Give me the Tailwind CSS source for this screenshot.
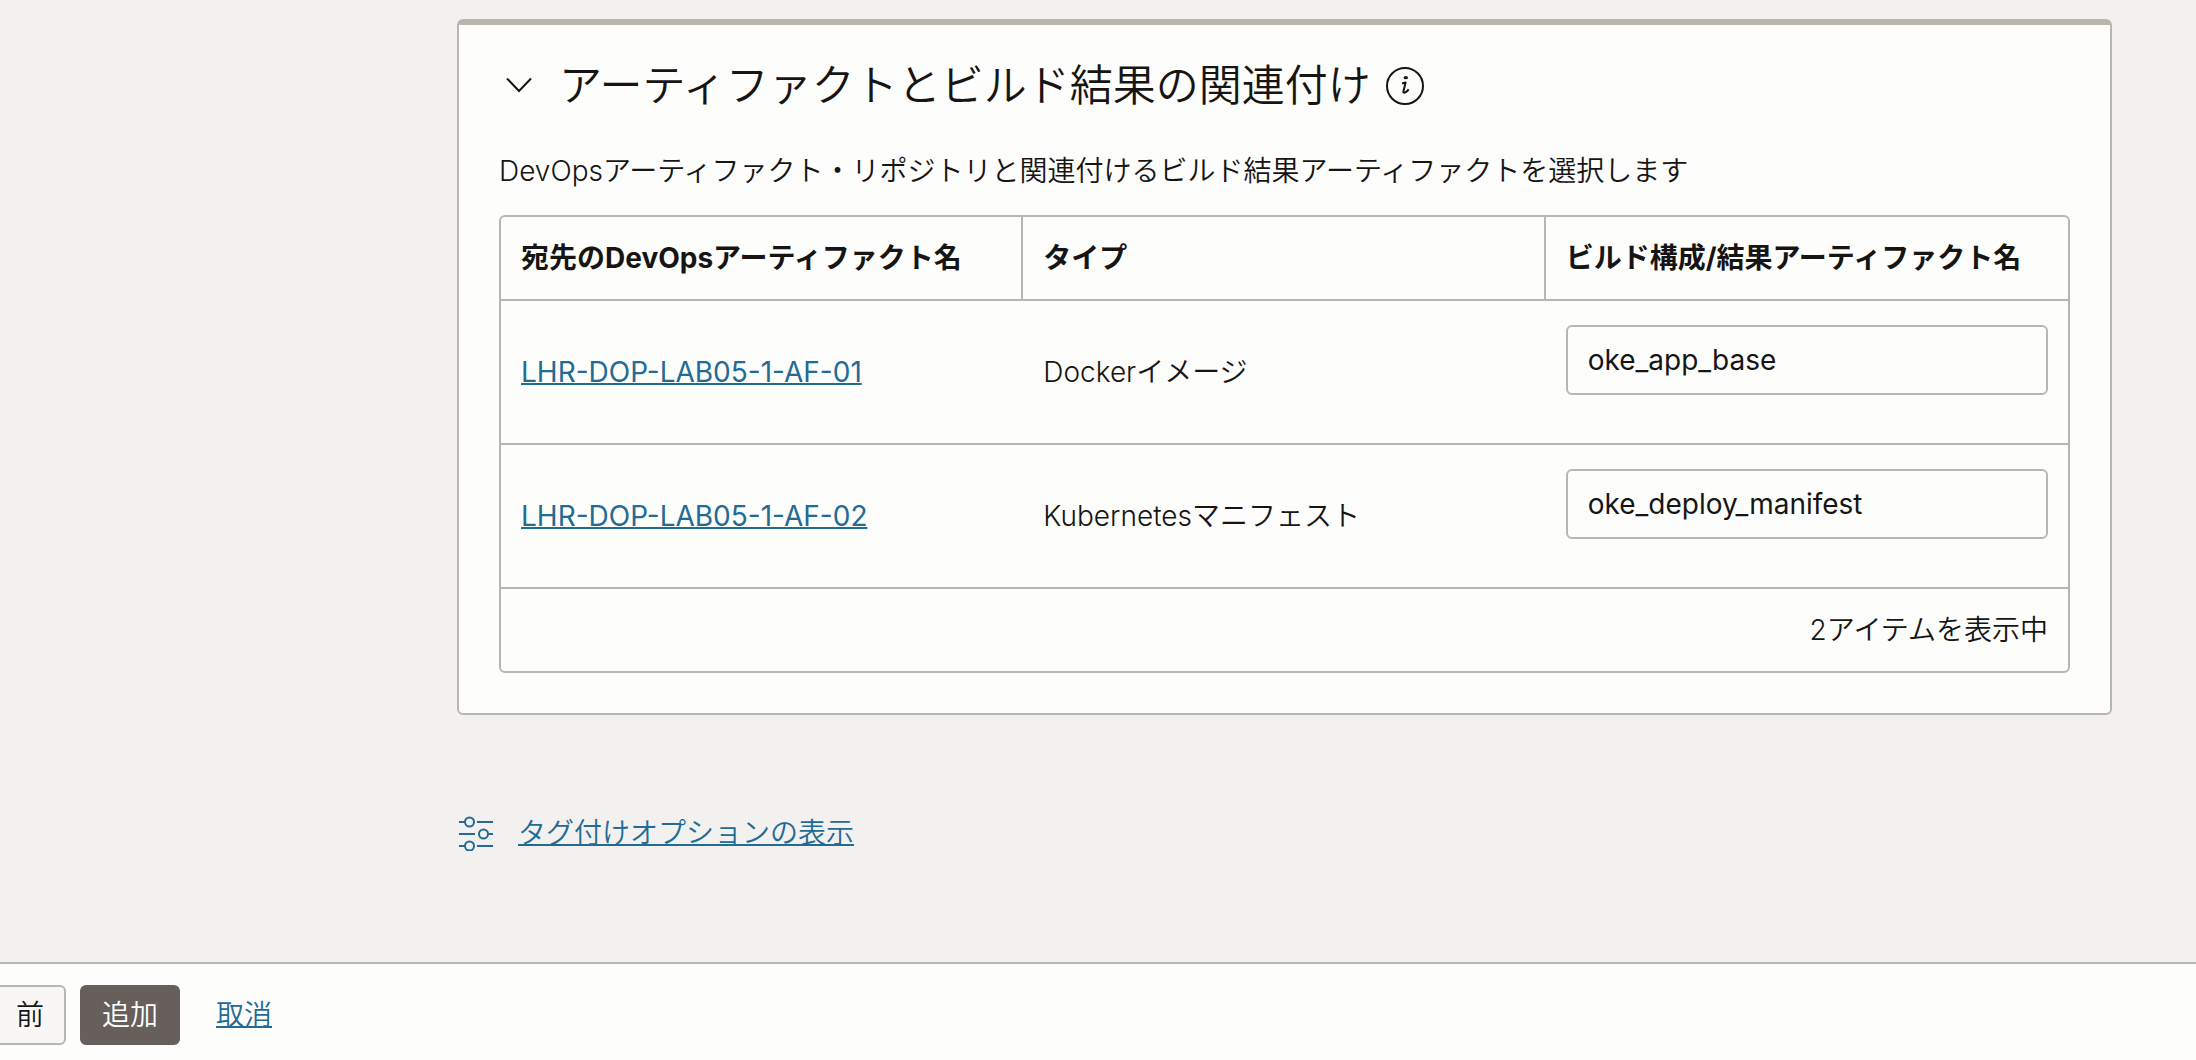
<!DOCTYPE html>
<html lang="ja">
<head>
  <meta charset="UTF-8" />
  <meta name="viewport" content="width=device-width, initial-scale=1.0" />
  <title>アーティファクトとビルド結果の関連付け</title>
  <script src="https://cdn.jsdelivr.net/npm/@tailwindcss/browser@4"></script>
</head>
<body class="flex min-h-screen flex-col bg-[#f3f1f0] font-['Inter','Noto_Sans_CJK_JP',sans-serif] text-[28px] leading-10 font-normal text-[#161513]">
  <main class="mt-[19px] mr-[84px] ml-[457px]">
    <section class="rounded-md border-2 border-t-[6px] border-[#bbb5b0] bg-[#fdfdfc] px-10 pt-[30px] pb-10">
      <div class="flex items-center">
        <button type="button" aria-label="折りたたむ" aria-expanded="true" class="flex h-14 w-10 items-center justify-center">
          <svg class="h-4 w-7" viewBox="0 0 28 16" fill="none" stroke="currentColor" stroke-width="2">
            <path d="M2 1.5L14 14L26 1.5" />
          </svg>
        </button>
        <h1 class="ml-5 text-[43px] leading-[60px] font-[350]">アーティファクトとビルド結果の関連付け</h1>
        <button type="button" aria-label="情報" class="ml-3.5">
          <svg class="size-10" viewBox="0 0 40 40" fill="none">
            <circle cx="20" cy="21" r="18" stroke="currentColor" stroke-width="2" />
            <ellipse cx="20.8" cy="12.7" rx="2.2" ry="1.600" fill="currentColor" />
            <path d="M17 18.400L20.600 17.600L18.400 26.400C18.100 28.200 19.600 28 20.800 27.200C21.900 26.500 22.800 25.600 23.600 24.400" stroke="currentColor" stroke-width="2" stroke-linejoin="round" />
          </svg>
        </button>
      </div>

      <p class="mt-9 font-[350]">DevOpsアーティファクト・リポジトリと関連付けるビルド結果アーティファクトを選択します</p>

      <table class="mt-6 w-full table-fixed border-separate border-spacing-0 rounded-md border-2 border-[#bbb5b0] text-left">
        <thead>
          <tr>
            <th scope="col" class="h-[84px] border-r-2 border-b-2 border-[#bbb5b0] px-5 font-bold whitespace-nowrap">宛先のDevOpsアーティファクト名</th>
            <th scope="col" class="border-r-2 border-b-2 border-[#bbb5b0] px-5 font-bold whitespace-nowrap">タイプ</th>
            <th scope="col" class="border-b-2 border-[#bbb5b0] px-5 font-bold whitespace-nowrap">ビルド構成/結果アーティファクト名</th>
          </tr>
        </thead>
        <tbody>
          <tr>
            <td class="h-36 border-b-2 border-[#bbb5b0] px-5"><a href="#" class="text-[#226b95] underline decoration-2">LHR-DOP-LAB05-1-AF-01</a></td>
            <td class="border-b-2 border-[#bbb5b0] px-5 font-[350]">Dockerイメージ</td>
            <td class="border-b-2 border-[#bbb5b0] px-5 pt-6 align-top">
              <input type="text" aria-label="ビルド構成/結果アーティファクト名 1" value="oke_app_base" class="block h-[70px] w-full rounded-md border-2 border-[#bbb5b0] px-5" />
            </td>
          </tr>
          <tr>
            <td class="h-36 border-b-2 border-[#bbb5b0] px-5"><a href="#" class="text-[#226b95] underline decoration-2">LHR-DOP-LAB05-1-AF-02</a></td>
            <td class="border-b-2 border-[#bbb5b0] px-5 font-[350]">Kubernetesマニフェスト</td>
            <td class="border-b-2 border-[#bbb5b0] px-5 pt-6 align-top">
              <input type="text" aria-label="ビルド構成/結果アーティファクト名 2" value="oke_deploy_manifest" class="block h-[70px] w-full rounded-md border-2 border-[#bbb5b0] px-5" />
            </td>
          </tr>
        </tbody>
        <tfoot>
          <tr>
            <td colspan="3" class="h-[82px] px-5 text-right font-[350]">2アイテムを表示中</td>
          </tr>
        </tfoot>
      </table>
    </section>

    <a href="#" class="mt-[98px] ml-px flex w-fit items-center gap-6 font-[350] text-[#226b95]">
      <svg class="h-9 w-9" viewBox="0 0 36 36" fill="none" stroke="currentColor" stroke-width="2">
        <path d="M1 7H7M19 7H35M1 19H17M29 19H35M1 31H7M19 31H35" />
        <circle cx="11.500" cy="7" r="4.500" />
        <circle cx="25.500" cy="19" r="4.500" />
        <circle cx="11.500" cy="31" r="4.500" />
      </svg>
      <span class="underline decoration-2">タグ付けオプションの表示</span>
    </a>
  </main>

  <footer class="mt-auto flex items-start border-t-2 border-[#bbb5b0] bg-[#fdfdfc] pt-[21px] pb-[15px] font-[350]">
    <button type="button" class="-ml-1.5 h-[60px] rounded-md border-2 border-[#bbb5b0] bg-[#f8f7f6] px-5">前</button>
    <button type="button" class="ml-3.5 h-[60px] rounded-md border-2 border-[#665f5b] bg-[#665f5b] px-5 text-white">追加</button>
    <a href="#" class="ml-9 leading-[60px] text-[#226b95] underline decoration-2">取消</a>
  </footer>
</body>
</html>
